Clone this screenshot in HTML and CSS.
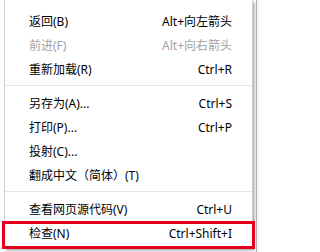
FILE: index.html
```html
<!DOCTYPE html>
<html lang="zh-CN">
<head>
<meta charset="utf-8">
<title>右键菜单</title>
<link rel="stylesheet" href="styles.css">
</head>
<body>
<div class="screen">
  <div class="gutter"></div>
  <div class="menu">
    <div class="item"><span class="label">返回(B)</span><span class="key">Alt+向左箭头</span></div>
    <div class="item disabled"><span class="label">前进(F)</span><span class="key">Alt+向右箭头</span></div>
    <div class="item"><span class="label">重新加载(R)</span><span class="key">Ctrl+R</span></div>
    <div class="sep"></div>
    <div class="item"><span class="label">另存为(A)...</span><span class="key">Ctrl+S</span></div>
    <div class="item"><span class="label">打印(P)...</span><span class="key">Ctrl+P</span></div>
    <div class="item"><span class="label">投射(C)...</span></div>
    <div class="item"><span class="label">翻成中文（简体）(T)</span></div>
    <div class="sep"></div>
    <div class="item"><span class="label">查看网页源代码(V)</span><span class="key">Ctrl+U</span></div>
    <div class="item marked"><span class="label">检查(N)</span><span class="key">Ctrl+Shift+I</span><span class="highlight"></span></div>
  </div>
  <div class="edge"></div>
</div>
</body>
</html>
```
FILE: styles.css
```css
html, body {
  margin: 0;
  padding: 0;
  background: #ffffff;
}

body {
  width: 259px;
  height: 252px;
  overflow: hidden;
  font-family: "Noto Sans", "Noto Sans CJK SC", sans-serif;
  font-size: 12px;
  color: #000000;
}

.screen {
  display: flex;
  align-items: flex-start;
  height: 252px;
}

.gutter {
  width: 4px;
  flex: none;
}

.menu {
  width: 247px;
  flex: none;
  background: #ffffff;
  border: 1px solid #cdcdcd;
  border-top: none;
  padding: 9px 0 3px;
  box-shadow: 2px 2px 2px rgba(0, 0, 0, 0.28);
}

.item {
  position: relative;
  height: 24px;
  display: flex;
  align-items: center;
  justify-content: space-between;
  padding: 0 20px 0 24px;
  white-space: nowrap;
}

.item.disabled {
  color: #a3a3a3;
}

.sep {
  height: 1px;
  background: #e6e6e6;
  margin: 4px 0 5px;
}

.highlight {
  position: absolute;
  left: -3px;
  right: -3px;
  top: 0;
  bottom: -4px;
  border: 3px solid #e2001a;
}

.edge {
  flex: 1;
  height: 252px;
  margin-left: 3px;
  border-left: 1px solid #b4b4b4;
  background: #f3f3f3;
}
```
